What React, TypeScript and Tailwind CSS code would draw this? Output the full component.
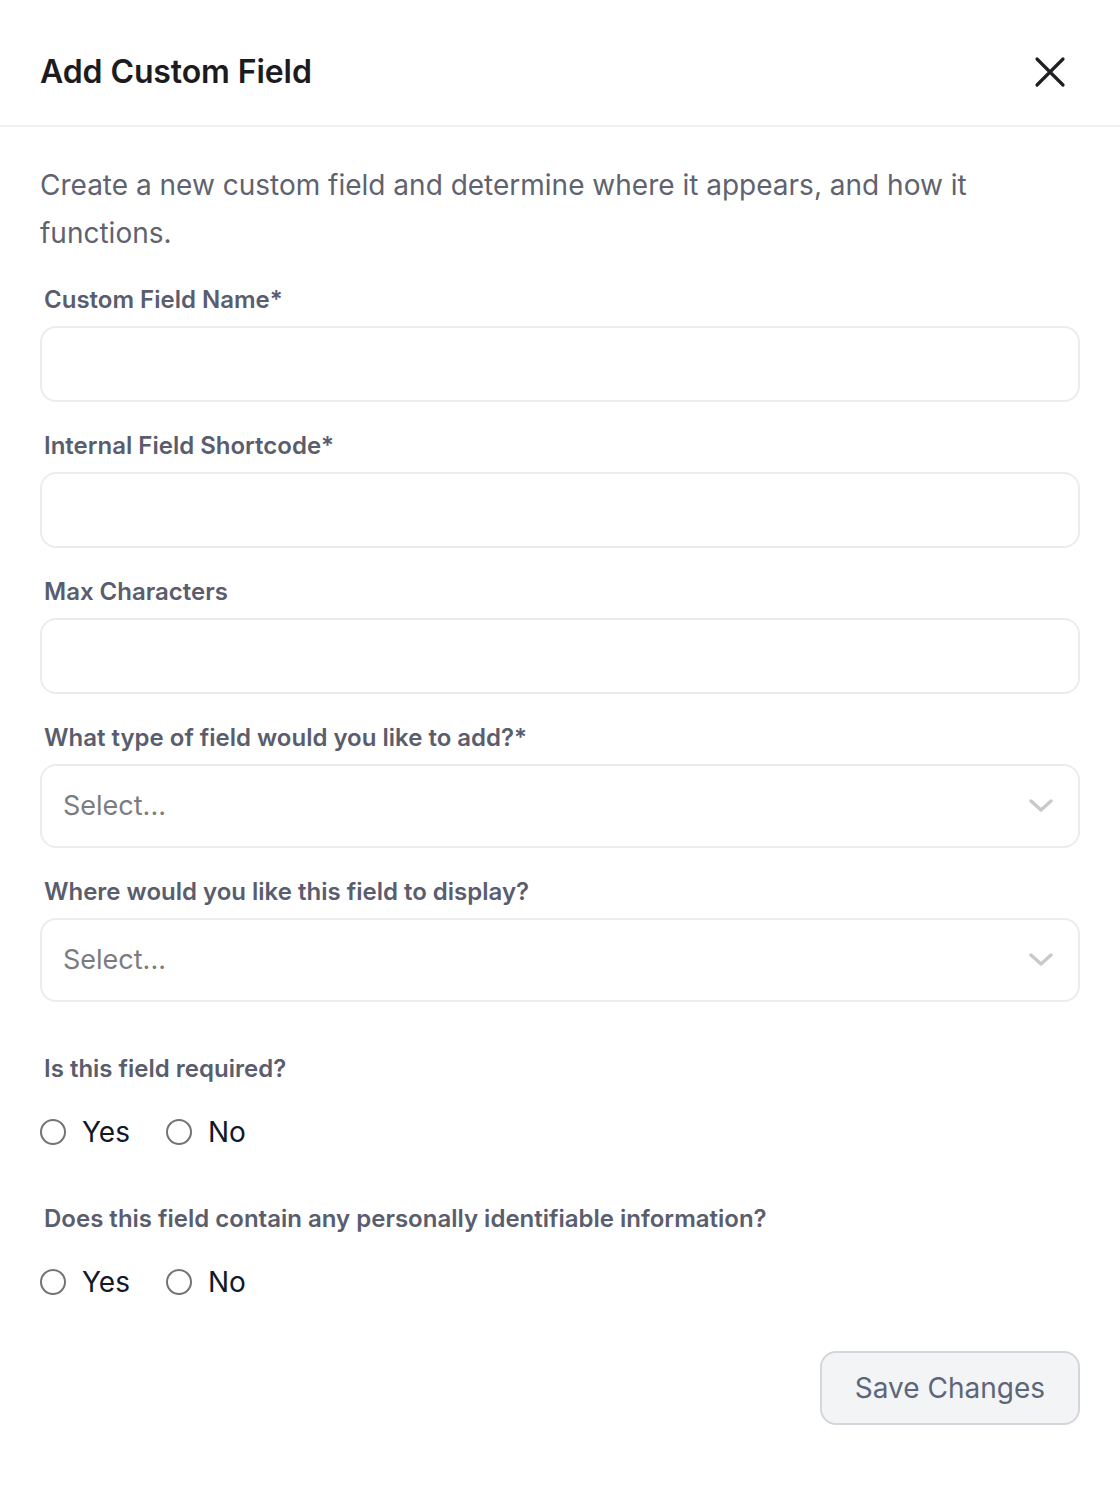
import React from "react";

const font = { fontFamily: "Inter, 'Noto Sans', sans-serif" };

function Label({ children, className = "" }: { children: React.ReactNode; className?: string }) {
  return (
    <div className={`pl-1 text-[24px] leading-[32px] font-semibold text-[#5a5d6d] ${className}`}>{children}</div>
  );
}

function TextInput() {
  return (
    <input
      type="text"
      className="block w-full h-[76px] rounded-[16px] border-2 border-[#ececee] bg-white outline-none"
    />
  );
}

function SelectBox() {
  return (
    <div className="flex items-center justify-between w-full h-[84px] rounded-[16px] border-2 border-[#ececee] bg-white pl-[21px] pr-[25px]">
      <span className="text-[27px] text-[#7c7c80]">Select...</span>
      <svg width="24" height="14" viewBox="0 0 24 14" fill="none">
        <path d="M2 2l10 9 10-9" stroke="#c9c9cb" strokeWidth="3.4" strokeLinecap="round" strokeLinejoin="round" />
      </svg>
    </div>
  );
}

function Radio({ label }: { label: string }) {
  return (
    <label className="flex items-center gap-[16px]">
      <span className="block w-[26px] h-[26px] rounded-full border-2 border-[#737373] bg-white" />
      <span className="text-[28px] leading-[36px] text-[#111827]">{label}</span>
    </label>
  );
}

function RadioRow() {
  return (
    <div className="flex items-center gap-[36px]">
      <Radio label="Yes" />
      <Radio label="No" />
    </div>
  );
}

export default function App() {
  return (
    <div className="w-[1120px] min-h-[1510px] bg-white" style={font}>
      <div className="h-[127px] flex items-center justify-between px-10 pt-[18px] border-b-2 border-[#f1f1f3]">
        <h1 className="text-[32px] font-semibold text-[#1c1c1e] tracking-[-0.1px]">Add Custom Field</h1>
        <button className="mr-[14px]">
          <svg width="32" height="32" viewBox="0 0 32 32" fill="none">
            <path d="M3 3l26 26M29 3L3 29" stroke="#1f1f22" strokeWidth="3.2" strokeLinecap="round" />
          </svg>
        </button>
      </div>
      <div className="px-10 pt-[34px]">
        <p className="text-[28px] leading-[48px] text-[#60636f]">
          Create a new custom field and determine where it appears, and how it functions.
        </p>
        <div className="mt-[27px]">
          <Label className="mb-[10px]">Custom Field Name*</Label>
          <TextInput />
        </div>
        <div className="mt-[28px]">
          <Label className="mb-[10px]">Internal Field Shortcode*</Label>
          <TextInput />
        </div>
        <div className="mt-[28px]">
          <Label className="mb-[10px]">Max Characters</Label>
          <TextInput />
        </div>
        <div className="mt-[28px]">
          <Label className="mb-[10px]">What type of field would you like to add?*</Label>
          <SelectBox />
        </div>
        <div className="mt-[28px]">
          <Label className="mb-[10px]">Where would you like this field to display?</Label>
          <SelectBox />
        </div>
        <div className="mt-[51px]">
          <Label className="mb-[29px]">Is this field required?</Label>
          <RadioRow />
        </div>
        <div className="mt-[53px]">
          <Label className="mb-[29px]">Does this field contain any personally identifiable information?</Label>
          <RadioRow />
        </div>
        <div className="mt-[51px] flex justify-end">
          <button className="h-[74px] px-[33px] rounded-[16px] border-2 border-[#d4d6db] bg-[#f3f4f6] text-[28px] text-[#5d6678]">
            Save Changes
          </button>
        </div>
      </div>
    </div>
  );
}
